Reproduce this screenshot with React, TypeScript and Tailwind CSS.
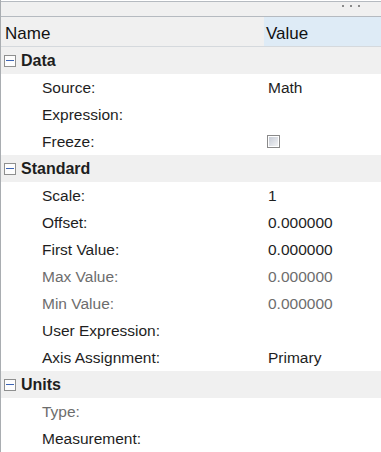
const groups = [
  {
    name: "Data",
    rows: [
      { label: "Source:", value: "Math" },
      { label: "Expression:", value: "" },
      { label: "Freeze:", value: "", check: true },
    ],
  },
  {
    name: "Standard",
    rows: [
      { label: "Scale:", value: "1" },
      { label: "Offset:", value: "0.000000" },
      { label: "First Value:", value: "0.000000" },
      { label: "Max Value:", value: "0.000000", dim: true },
      { label: "Min Value:", value: "0.000000", dim: true },
      { label: "User Expression:", value: "" },
      { label: "Axis Assignment:", value: "Primary" },
    ],
  },
  {
    name: "Units",
    rows: [
      { label: "Type:", value: "", dim: true },
      { label: "Measurement:", value: "" },
    ],
  },
];

type Row = { label: string; value: string; dim?: boolean; check?: boolean };

function Minus() {
  return (
    <div className="flex h-[12px] w-[12px] items-center justify-center border border-[#8e8f8f] bg-[#fdfdfd]">
      <div className="h-[1.5px] w-[8px] bg-[#3c64b4]" />
    </div>
  );
}

function PropRow({ row }: { row: Row }) {
  const color = row.dim ? "text-[#6d6d6d]" : "text-[#1e1e1e]";
  return (
    <div className={`flex h-[27px] items-center text-[15.5px] ${color}`}>
      <div className="w-[263px] pl-[41px]">{row.label}</div>
      <div className="flex-1 pl-[4px]">
        {row.check ? (
          <div className="ml-[-1px] h-[13px] w-[13px] border border-[#8a8a8a] bg-[#fff] p-[1px]">
            <div className="h-full w-full bg-gradient-to-br from-[#c7ccd6] to-[#f2f3f5]" />
          </div>
        ) : (
          row.value
        )}
      </div>
    </div>
  );
}

export default function App() {
  return (
    <div
      className="h-[452px] w-[381px] overflow-hidden border-l border-[#a9adb1] bg-white"
      style={{ fontFamily: '"Liberation Sans", Arial, sans-serif' }}
    >
      {/* toolbar strip */}
      <div className="mt-[1px] flex h-[16px] justify-end gap-[6px] border-y border-[#b5bac0] bg-[#f0f0f0] pr-[21px] pt-[3px]">
        <div className="h-[2px] w-[2px] bg-[#8a8a8a]" />
        <div className="h-[2px] w-[2px] bg-[#8a8a8a]" />
        <div className="h-[2px] w-[2px] bg-[#8a8a8a]" />
      </div>

      {/* header */}
      <div className="flex h-[30px] border-b border-[#d5d9dd] text-[17px] text-[#111]">
        <div className="flex w-[263px] items-center bg-[#f0f0f0] pl-[4px] pt-[4px]">Name</div>
        <div className="flex flex-1 items-center bg-[#deebf6] pl-[2px] pt-[4px]">Value</div>
      </div>

      {groups.map((g) => (
        <div key={g.name}>
          <div className="flex h-[27px] items-center gap-[5px] bg-[#f0f0f0] pl-[3px] text-[16px] font-bold text-[#1e1e1e]">
            <Minus />
            <span>{g.name}</span>
          </div>
          {g.rows.map((r) => (
            <PropRow key={r.label} row={r} />
          ))}
        </div>
      ))}
    </div>
  );
}
